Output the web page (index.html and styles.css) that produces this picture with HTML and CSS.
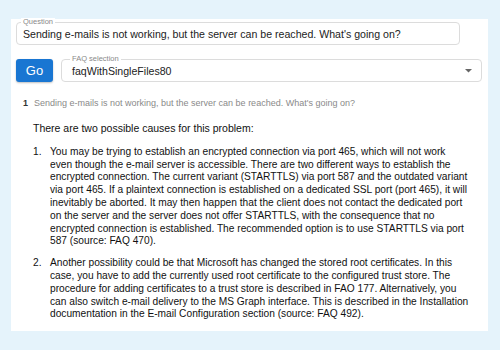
FILE: index.html
```html
<!DOCTYPE html>
<html>
<head>
<meta charset="utf-8">
<link rel="stylesheet" href="styles.css">
</head>
<body>
<div class="panel">
  <div class="field question">
    <span class="flabel">Question</span>
    <div class="fvalue">Sending e-mails is not working, but the server can be reached. What's going on?</div>
  </div>
  <div class="row">
    <button class="go">Go</button>
    <div class="field select">
      <span class="flabel">FAQ selection</span>
      <div class="fvalue">faqWithSingleFiles80</div>
      <svg class="arrow" width="7" height="4" viewBox="0 0 7 4"><path d="M0 0 L7 0 L3.5 3.5 Z" fill="#666"/></svg>
    </div>
  </div>
  <div class="result">
    <span class="rnum">1</span>
    <span class="rq">Sending e-mails is not working, but the server can be reached. What's going on?</span>
  </div>
  <div class="answer">
    <p class="intro">There are two possible causes for this problem:</p>
    <ol class="causes">
      <li><span class="num">1.</span><span>You may be trying to establish an encrypted connection via port 465, which will not work even though the e-mail server is accessible. There are two different ways to establish the encrypted connection. The current variant (STARTTLS) via port 587 and the outdated variant via port 465. If a plaintext connection is established on a dedicated SSL port (port 465), it will inevitably be aborted. It may then happen that the client does not contact the dedicated port on the server and the server does not offer STARTTLS, with the consequence that no encrypted connection is established. The recommended option is to use STARTTLS via port 587 (source: FAQ 470).</span></li>
      <li><span class="num">2.</span><span>Another possibility could be that Microsoft has changed the stored root certificates. In this case, you have to add the currently used root certificate to the configured trust store. The procedure for adding certificates to a trust store is described in FAO 177. Alternatively, you can also switch e-mail delivery to the MS Graph interface. This is described in the Installation documentation in the E-mail Configuration section (source: FAQ 492).</span></li>
    </ol>
  </div>
</div>
</body>
</html>
```
FILE: styles.css
```css
html, body {
  margin: 0;
  padding: 0;
}
body {
  background: #e5f3fb;
  width: 500px;
  height: 350px;
  overflow: hidden;
  font-family: "Liberation Sans", Arial, sans-serif;
}
.panel {
  box-sizing: border-box;
  margin: 19px 0 0 11px;
  width: 477px;
  height: 312px;
  background: #ffffff;
  padding: 3px 6px 0 5px;
}
.field {
  position: relative;
  box-sizing: border-box;
  height: 23px;
  border: 1px solid #dcdcdc;
  border-radius: 4px;
  display: flex;
  align-items: center;
}
.question {
  width: 444px;
}
.flabel {
  position: absolute;
  top: -5px;
  left: 4px;
  padding: 0 2px;
  background: #fff;
  font-size: 7.5px;
  line-height: 8px;
  color: #8a8a8a;
}
.select .flabel {
  left: 8px;
}
.fvalue {
  padding-left: 6px;
  font-size: 10.6px;
  color: #222;
  white-space: nowrap;
}
.row {
  display: flex;
  gap: 8px;
  margin-top: 14px;
}
.go {
  width: 37px;
  height: 23px;
  border: none;
  border-radius: 3px;
  background: #1976d2;
  color: #fff;
  font-family: "Liberation Sans", Arial, sans-serif;
  font-size: 13px;
  padding: 0;
  box-shadow: 0 1px 2px rgba(0,0,0,0.25);
}
.select {
  flex: 1;
  justify-content: space-between;
}
.select .fvalue {
  padding-left: 10px;
}
.arrow {
  margin-right: 9px;
}
.result {
  margin-top: 16px;
  padding-left: 7px;
  display: flex;
  align-items: baseline;
  gap: 6px;
}
.rnum {
  font-size: 9px;
  font-weight: bold;
  color: #333;
}
.rq {
  font-size: 9px;
  color: #8a8a8a;
}
.answer {
  padding: 0 12.5px 0 17px;
  font-size: 10.2px;
  line-height: 12.8px;
  color: #111;
}
.intro {
  margin: 14px 0 0 0;
  font-size: 10.5px;
}
.causes {
  margin: 11px 0 0 0;
  padding: 0;
  list-style: none;
}
.causes li {
  display: grid;
  grid-template-columns: 17px 1fr;
  margin-bottom: 9px;
}
```
